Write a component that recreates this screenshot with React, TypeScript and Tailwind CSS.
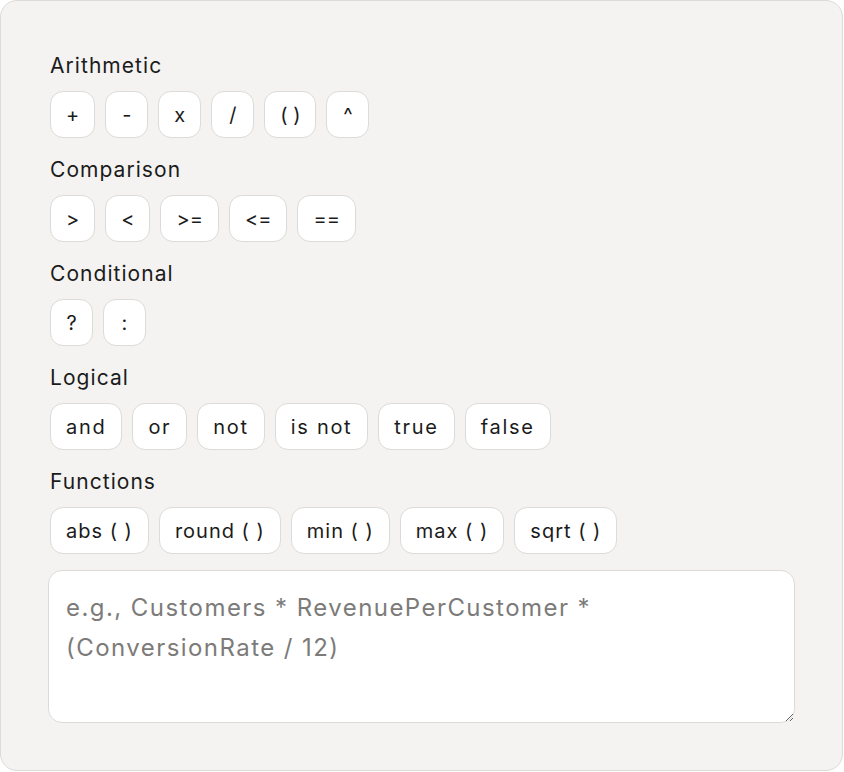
const sections: { label: string; items: string[]; track: string }[] = [
  { label: "Arithmetic", items: ["+", "-", "x", "/", "( )", "^"], track: "tracking-normal" },
  { label: "Comparison", items: [">", "<", ">=", "<=", "=="], track: "tracking-normal" },
  { label: "Conditional", items: ["?", ":"], track: "tracking-normal" },
  { label: "Logical", items: ["and", "or", "not", "is not", "true", "false"], track: "tracking-[0.085em]" },
  { label: "Functions", items: ["abs ( )", "round ( )", "min ( )", "max ( )", "sqrt ( )"], track: "tracking-[0.05em]" },
];

function Token({ text, track }: { text: string; track: string }) {
  return (
    <button
      type="button"
      className={`flex h-[47px] min-w-[43px] items-center justify-center rounded-[13px] border-[1.5px] border-[#dcdbd8] bg-white px-[15px] text-[20px] leading-none text-[#1b1b1b] ${track}`}
    >
      {text}
    </button>
  );
}

export default function App() {
  return (
    <div className="min-h-screen bg-white font-['Inter',sans-serif]">
      <div className="flex h-[771px] w-[843px] flex-col rounded-[17px] border-[1.5px] border-[#dcdbd8] bg-[#f4f3f1] px-[47px] pt-[51px]">
        {sections.map((s) => (
          <div key={s.label} className="mb-[18px] flex flex-col">
            <div className="mb-[11px] ml-[2px] text-[21px] leading-[28px] tracking-[0.05em] text-[#1b1b1b]">
              {s.label}
            </div>
            <div className="flex gap-[10px] pl-[2px]">
              {s.items.map((t) => (
                <Token key={t} text={t} track={s.track} />
              ))}
            </div>
          </div>
        ))}
        <textarea
          className="-mt-[2px] h-[153px] w-full rounded-[14px] border-[1.5px] border-[#dcdbd8] bg-white px-[17px] py-[17px] text-[24px] leading-[40px] tracking-[0.06em] text-[#1b1b1b] outline-none placeholder:text-[#7c7b79]"
          placeholder={"e.g., Customers * RevenuePerCustomer *\n(ConversionRate / 12)"}
        />
      </div>
    </div>
  );
}
